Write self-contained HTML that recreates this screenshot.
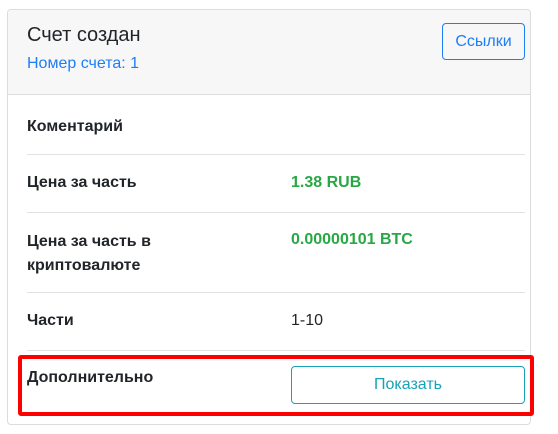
<!DOCTYPE html>
<html><head><meta charset="utf-8"><style>
body{margin:0;background:#fff;font-family:"Liberation Sans",sans-serif;color:#212529;}
.card{position:absolute;left:7px;top:9px;width:522px;height:414px;border:1px solid #dcdcdc;border-radius:4px;overflow:hidden;}
.hdr{position:absolute;left:0;top:0;right:0;height:84px;background:#f7f7f7;border-bottom:1px solid #dcdcdc;}
.t{position:absolute;left:19px;top:14px;font-size:20px;}
.s{position:absolute;left:19px;top:45px;font-size:16px;color:#1e7ef5;}
.b1{position:absolute;left:434px;top:13px;width:83px;height:37px;box-sizing:border-box;border:1px solid #1e7ef5;border-radius:4px;color:#1e7ef5;font-size:16px;text-align:center;line-height:35px;}
.l{position:absolute;left:27px;font-size:16px;font-weight:bold;}
.v{position:absolute;left:291px;font-size:16px;}
.g{color:#28a745;font-weight:bold;}
.sep{position:absolute;left:27px;width:498px;height:1px;background:#e2e2e2;}
.red{position:absolute;left:18px;top:355px;width:516px;height:61px;box-sizing:border-box;border:4px solid #f00;border-radius:3px;}
.b2{position:absolute;left:291px;top:366px;width:234px;height:38px;box-sizing:border-box;border:1px solid #17a2b8;border-radius:4px;color:#17a2b8;font-size:16px;text-align:center;line-height:36px;}
</style></head><body>
<div class="card"><div class="hdr"><div class="t">Счет создан</div><div class="s">Номер счета: 1</div><div class="b1">Ссылки</div></div></div>
<div class="l" style="top:118px">Коментарий</div>
<div class="sep" style="top:154px"></div>
<div class="l" style="top:174px">Цена за часть</div>
<div class="v g" style="top:174px">1.38 RUB</div>
<div class="sep" style="top:212px"></div>
<div class="l" style="top:230px;line-height:24px">Цена за часть в<br>криптовалюте</div>
<div class="v g" style="top:231px">0.00000101 BTC</div>
<div class="sep" style="top:292px"></div>
<div class="l" style="top:312px">Части</div>
<div class="v" style="top:312px">1-10</div>
<div class="sep" style="top:350px"></div>
<div class="red"></div>
<div class="l" style="top:369px">Дополнительно</div>
<div class="b2">Показать</div>
</body></html>
